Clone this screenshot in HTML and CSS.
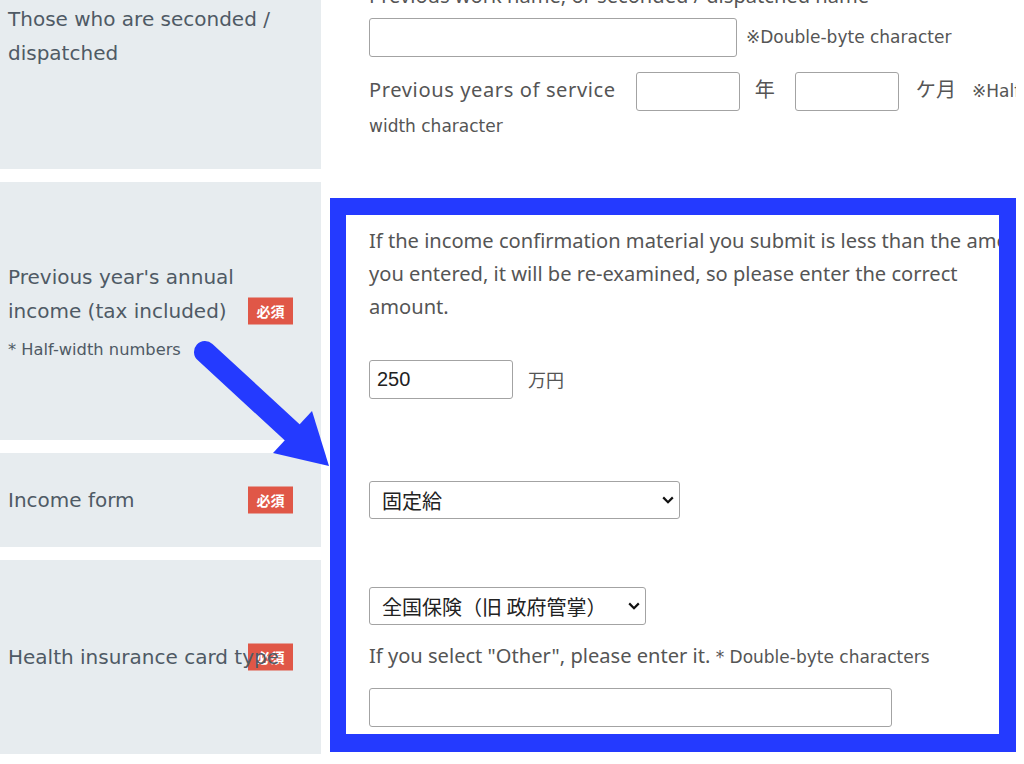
FILE: index.html
```html
<!DOCTYPE html>
<html lang="en">
<head>
<meta charset="utf-8">
<title>Application form</title>
<link rel="stylesheet" href="styles.css">
</head>
<body>
<div class="page">
  <div class="form">
    <div class="row row-seconded">
      <div class="label-cell label-top">
        <div class="label-block"><span class="label">Those who are seconded / dispatched</span></div>
      </div>
      <div class="field-cell cell-seconded">
        <p class="field-title">Previous work name, or seconded / dispatched name</p>
        <div class="field-line"><input class="input input-name" type="text"><span class="note">※Double-byte character</span></div>
        <div class="service"><span class="service-label">Previous years of service</span><input class="input input-years" type="text"><span class="unit unit-year">年</span><input class="input input-years" type="text"><span class="unit unit-month">ケ月</span><span class="note note-service">※Half-<br>width character</span></div>
      </div>
    </div>

    <div class="row row-income">
      <div class="label-cell">
        <div class="label-block">
          <span class="label">Previous year's annual income (tax included)</span>
          <span class="sub-note">* Half-width numbers</span>
        </div>
        <span class="badge">必須</span>
      </div>
      <div class="field-cell cell-income">
        <p class="notice">If the income confirmation material you submit is less than the amount<br>you entered, it will be re-examined, so please enter the correct<br>amount.</p>
        <div class="field-line amount"><input class="input input-amount" type="text" value="250"><span class="unit unit-yen">万円</span></div>
      </div>
    </div>

    <div class="row row-form">
      <div class="label-cell">
        <div class="label-block"><span class="label">Income form</span></div>
        <span class="badge">必須</span>
      </div>
      <div class="field-cell cell-form">
        <div class="select-wrap select-form">
          <select class="select"><option>固定給</option></select>
          <svg class="chevron" width="12" height="8" viewBox="0 0 12 8"><path d="M1.2 1.4 6 6.2 10.8 1.4" fill="none" stroke="#111" stroke-width="2.2"/></svg>
        </div>
      </div>
    </div>

    <div class="row row-insurance">
      <div class="label-cell">
        <div class="label-block"><span class="label">Health insurance card type</span></div>
        <span class="badge">必須</span>
      </div>
      <div class="field-cell cell-insurance">
        <div class="select-wrap select-insurance">
          <select class="select"><option>全国保険（旧 政府管掌）</option></select>
          <svg class="chevron" width="12" height="8" viewBox="0 0 12 8"><path d="M1.2 1.4 6 6.2 10.8 1.4" fill="none" stroke="#111" stroke-width="2.2"/></svg>
        </div>
        <p class="hint">If you select "Other", please enter it. <span class="note-inline">* Double-byte characters</span></p>
        <input class="input input-other" type="text">
      </div>
    </div>
  </div>
</div>

<div class="edge-mask"></div>
<div class="highlight"></div>
<svg class="arrow" width="145" height="135" viewBox="0 0 145 135">
  <line x1="15" y1="17" x2="104" y2="99" stroke="#243aff" stroke-width="22" stroke-linecap="round"/>
  <polygon points="122,76 83,118 139,131" fill="#243aff"/>
</svg>
</body>
</html>
```

FILE: styles.css
```css
html, body {
  margin: 0;
  padding: 0;
  overflow: hidden;
  background: #fff;
}

body {
  width: 1024px;
  height: 764px;
  position: relative;
  font-family: "Noto Sans", "Noto Sans CJK JP", sans-serif;
  color: #555;
}

.page {
  margin-top: -48px;
  width: 1120px;
}

.form {
  display: flex;
  flex-direction: column;
  gap: 13px;
}

.row {
  display: grid;
  grid-template-columns: 321px 1fr;
}

/* ---------- label column ---------- */
.label-cell {
  background: #e7ecef;
  position: relative;
  padding: 0 28px 0 8px;
  display: flex;
  align-items: center;
  font-family: "DejaVu Sans", "Noto Sans CJK JP", sans-serif;
  font-size: 20px;
  line-height: 34px;
  color: #4f5a65;
}

.label-top {
  align-items: flex-start;
  padding-top: 50px;
}

.label-block {
  position: relative;
  z-index: 1;
  display: flex;
  flex-direction: column;
}

.sub-note {
  font-size: 16.3px;
  line-height: 24px;
  margin-top: 10px;
}

.badge {
  position: absolute;
  right: 28px;
  top: 50%;
  transform: translateY(-50%);
  width: 45px;
  height: 27px;
  background: #e05747;
  color: #fff;
  font-family: "Noto Sans CJK JP", sans-serif;
  font-weight: 700;
  font-size: 14px;
  line-height: 27px;
  text-align: center;
  z-index: 0;
}

/* ---------- field column ---------- */
.field-cell {
  padding: 28px 20px 28px 48px;
  font-size: 20.1px;
  line-height: 33px;
  white-space: nowrap;
}

.cell-seconded {
  padding-top: 27px;
  padding-bottom: 26px;
}

.field-title {
  margin: 0;
}

.field-line {
  display: flex;
  align-items: center;
  height: 39px;
  margin-top: 6px;
}

.input {
  box-sizing: border-box;
  height: 39px;
  border: 1px solid #a3a3a3;
  border-radius: 3px;
  background: #fff;
  font-family: "Liberation Sans", "Noto Sans CJK JP", sans-serif;
  font-size: 20px;
  color: #222;
  padding: 0 7px;
  margin: 0;
}

.input-name {
  width: 368px;
}

.note {
  font-family: "DejaVu Sans", "Noto Sans CJK JP", sans-serif;
  font-size: 17px;
  margin-left: 9px;
}

.service {
  margin-top: 15px;
  line-height: 34px;
}

.service-label {
  letter-spacing: 0.6px;
}

.input-years {
  width: 104px;
  vertical-align: middle;
  margin: -4px 0 -4px 20px;
}

.unit {
  font-family: "Noto Sans CJK JP", sans-serif;
}

.unit-year {
  margin-left: 15px;
}

.unit-month {
  margin-left: 17px;
}

.note-service {
  margin-left: 16px;
}

.notice {
  margin: 14px 0 0;
}

.amount {
  margin-top: 37px;
  margin-bottom: 13px;
}

.input-amount {
  width: 144px;
}

.unit-yen {
  margin-left: 15px;
  font-size: 18px;
}

.select-wrap {
  display: inline-block;
  position: relative;
  vertical-align: top;
}

.select {
  display: block;
  -webkit-appearance: none;
  appearance: none;
  box-sizing: border-box;
  height: 38px;
  border: 1px solid #a3a3a3;
  border-radius: 3px;
  background: #fff;
  color: #222;
  font-family: "Noto Sans CJK JP", sans-serif;
  font-size: 20px;
  padding: 0 0 0 12px;
  margin: 0;
}

.select-form .select {
  width: 311px;
}

.select-insurance .select {
  width: 277px;
}

.chevron {
  position: absolute;
  right: 6px;
  top: 15px;
  pointer-events: none;
}

.cell-insurance {
  padding-top: 27px;
  padding-bottom: 27px;
}

.hint {
  margin: 14px 0 0;
}

.note-inline {
  font-family: "DejaVu Sans", "Noto Sans CJK JP", sans-serif;
  font-size: 17px;
}

.input-other {
  display: block;
  width: 523px;
  margin-top: 14px;
}

/* ---------- annotation overlay ---------- */
.edge-mask {
  position: absolute;
  top: 0;
  right: 0;
  width: 8px;
  height: 100%;
  background: #fff;
}

.highlight {
  position: absolute;
  left: 330px;
  top: 198px;
  width: 686px;
  height: 554px;
  box-sizing: border-box;
  border-style: solid;
  border-color: #243aff;
  border-width: 17px 17px 18px 16px;
  pointer-events: none;
}

.arrow {
  position: absolute;
  left: 190px;
  top: 335px;
  pointer-events: none;
}
```
